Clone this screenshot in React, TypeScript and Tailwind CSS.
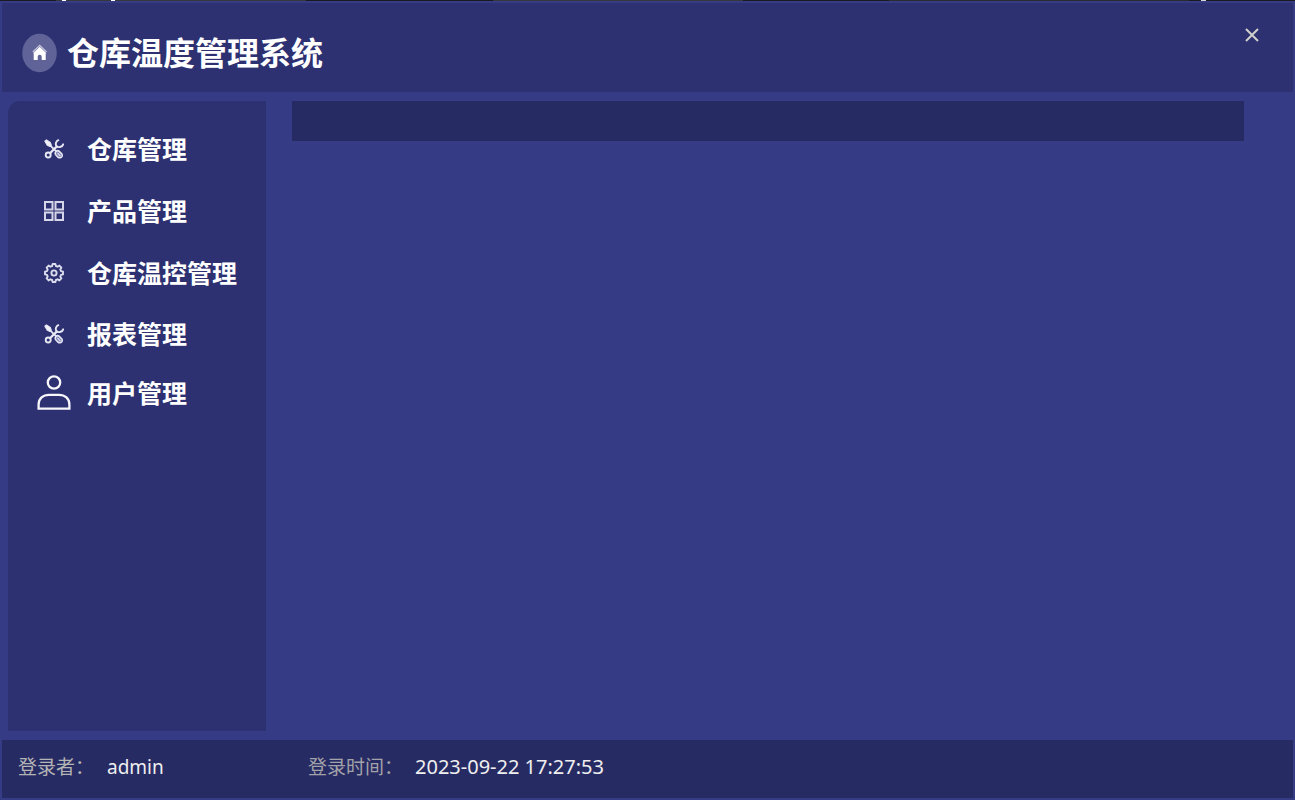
import type { ReactNode } from "react";

function HomeIcon() {
  return (
    <svg viewBox="0 0 36 40" className="h-10 w-9" aria-hidden="true">
      <ellipse cx="17.500" cy="20" rx="17.300" ry="19.200" fill="#5f6398" />
      <path d="M10.800 19 17.700 12.400l6.900 6.600" fill="none" stroke="#c3c4da" strokeWidth="1.300" />
      <path d="M17.700 13.800 24.400 20.300h-.7V27h-4v-3.200a2 2 0 0 0-4 0V27h-4v-6.700H11z" fill="#fff" />
    </svg>
  );
}

function ToolsIcon() {
  return (
    <svg viewBox="0 0 20 20" className="size-5" fill="none" stroke="#e6e7f3" strokeLinecap="round" strokeLinejoin="round" aria-hidden="true">
      <path d="M.9 2.200 2.400.9 6.300 3.600 7.300 6.300 6 7.400 3.300 6.200z" fill="#f1f1f8" strokeWidth="1.200" />
      <path d="m6.600 6.900 5.600 5.400" strokeWidth="1.800" />
      <path d="M12 12.500c1-1.100 2.300-1 3.300-.1l2.200 2.200c1.300 1.400.9 3.300-.6 4-1.200.5-2.300.2-3.200-.7l-1.800-1.900c-.9-1-.8-2.500.1-3.500z" fill="#7b7fb0" strokeWidth="1.500" />
      <path d="m13.800 14.300 2.400 2.500" strokeWidth="1.200" />
      <circle cx="4.200" cy="16" r="2.500" strokeWidth="1.900" />
      <path d="M6.200 14 12.700 7.700" strokeWidth="2.300" />
      <path d="M14.300 1.200c-2.300 1.100-3.200 3.700-1.900 5.700 1.800 2.200 5.900 1.200 6.800-1.600" strokeWidth="1.900" />
    </svg>
  );
}

function GridIcon() {
  return (
    <svg viewBox="0 0 20 20" className="size-5" fill="none" stroke="#d5d6e8" strokeWidth="2" aria-hidden="true">
      <rect x="1" y="1" width="7.500" height="7.500" />
      <rect x="11.500" y="1" width="7.500" height="7.500" />
      <rect x="1" y="11.500" width="7.500" height="7.500" />
      <rect x="11.500" y="11.500" width="7.500" height="7.500" />
    </svg>
  );
}

function GearIcon() {
  return (
    <svg viewBox="0 0 20 20" className="size-5" fill="none" stroke="#dcddec" strokeWidth="1.900" strokeLinejoin="round" aria-hidden="true">
      <path d="M8.600 1h2.800l.5 2 1.700.7 1.800-1.100 2 2-1.100 1.800.7 1.700 2 .5v2.800l-2 .5-.7 1.700 1.100 1.800-2 2-1.800-1.100-1.700.7-.5 2H8.600l-.5-2-1.700-.7-1.800 1.100-2-2 1.100-1.800L3 11.900l-2-.5V8.600l2-.5.7-1.700-1.100-1.800 2-2 1.800 1.100L8.100 3z" />
      <circle cx="10" cy="10" r="2.600" />
    </svg>
  );
}

function UserIcon() {
  return (
    <svg viewBox="0 0 34 36" className="h-9 w-[34px]" fill="none" stroke="#f6f6fb" strokeWidth="2.300" aria-hidden="true">
      <circle cx="17" cy="7.500" r="6.200" />
      <path d="M1.600 33.600V29.500c0-6 4.400-9.700 10.400-9.700h10c6 0 10.400 3.700 10.400 9.700v4.100z" />
    </svg>
  );
}

const menu: { label: string; icon: ReactNode; height: string }[] = [
  { label: "仓库管理", icon: <ToolsIcon />, height: "h-[62px]" },
  { label: "产品管理", icon: <GridIcon />, height: "h-[62px]" },
  { label: "仓库温控管理", icon: <GearIcon />, height: "h-[62px]" },
  { label: "报表管理", icon: <ToolsIcon />, height: "h-[60px]" },
  { label: "用户管理", icon: <UserIcon />, height: "h-[58px]" },
];

export default function App() {
  return (
    <div className="flex min-h-screen flex-col bg-[#353c85] font-['Noto_Sans','Noto_Sans_CJK_SC',sans-serif] text-white">
      <div className="flex h-px bg-[#1b1b1f]" aria-hidden="true">
        <div className="w-14" />
        <div className="w-1.5 bg-[#38383a]" />
        <div className="w-1 bg-white" />
        <div className="w-[45px] bg-[#38383a]" />
        <div className="w-1 bg-white" />
        <div className="w-[191px] bg-[#38383a]" />
        <div className="w-[187px]" />
        <div className="w-[250px] bg-[#38383a]" />
        <div className="w-[146px]" />
        <div className="w-[300px] bg-[#2c2c2e]" />
        <div className="w-3" />
        <div className="w-[5px] bg-[#d8d8d8]" />
      </div>
      <header className="mx-0.5 mt-0.5 flex h-[89px] items-start justify-between bg-[#2d3172] pt-[30px] pr-[29px] pl-5">
        <div className="flex items-center gap-[9px]">
          <HomeIcon />
          <h1 className="pb-1 font-['Noto_Sans_CJK_SC',sans-serif] text-[32px] leading-9 font-bold">仓库温度管理系统</h1>
        </div>
        <button type="button" aria-label="关闭" className="-mt-2.5 flex size-6 items-center justify-center text-[#d0d0cc]">
          <svg viewBox="0 0 14 14" className="size-3.5" stroke="currentColor" strokeWidth="2" aria-hidden="true">
            <path d="m1 1 12 12M13 1 1 13" />
          </svg>
        </button>
      </header>

      <div className="flex flex-1 gap-[26px] px-2 py-[9px]">
        <nav className="w-[258px] shrink-0 rounded-tl-xl bg-[#2d3172] pt-[17px]">
          <ul>
            {menu.map((item) => (
              <li key={item.label}>
                <button type="button" className={`flex w-full items-center gap-4 pl-[29px] text-left ${item.height}`}>
                  <span className="flex w-[34px] shrink-0 justify-center">{item.icon}</span>
                  <span className="pb-[3px] font-['Noto_Sans_CJK_SC',sans-serif] text-[25px] leading-8 font-bold">{item.label}</span>
                </button>
              </li>
            ))}
          </ul>
        </nav>
        <main className="flex-1 pr-[43px]">
          <div className="h-10 bg-[#272b64]" />
        </main>
      </div>

      <footer className="mx-0.5 mb-0.5 flex h-[58px] items-start bg-[#272b64] pt-[13px] pl-4 text-[19px] leading-7">
        <dl className="flex">
          <dt className="w-[89px] text-[#b4b4b4]">登录者：</dt>
          <dd className="w-[201px] text-[#efefef]">admin</dd>
          <dt className="w-[107px] text-[#a2a2a8]">登录时间：</dt>
          <dd className="text-xl leading-7 text-[#efefef]">2023-09-22 17:27:53</dd>
        </dl>
      </footer>
    </div>
  );
}
